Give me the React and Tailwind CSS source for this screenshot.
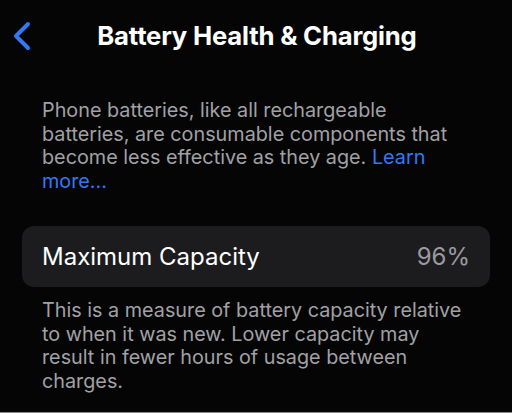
import React from 'react';

const App = () => {
  return (
    <div className="w-[512px] h-[413px] overflow-hidden bg-[#050505] text-white flex flex-col font-['Inter','Liberation_Sans',sans-serif] border-b border-[#8a8a8a]">
      {/* Nav bar */}
      <div className="relative h-[74px] flex items-center justify-center">
        <svg
          className="absolute left-[12px] top-[21px]"
          width="20"
          height="30"
          viewBox="0 0 20 30"
          fill="none"
        >
          <path
            d="M16 3 L4 15 L16 27"
            stroke="#3478f6"
            strokeWidth="4"
            strokeLinecap="round"
            strokeLinejoin="round"
          />
        </svg>
        <h1 className="text-[25.7px] font-bold tracking-[-0.2px] mt-[-1px] ml-[2px]">
          Battery Health &amp; Charging
        </h1>
      </div>

      <p className="ml-[42px] w-[432px] mt-[25px] text-[19.8px] leading-[23.5px] text-[#a1a1a6]">
        Phone batteries, like all rechargeable batteries, are consumable components that become less effective as they age.{' '}
        <span className="text-[#3478f6]">Learn more...</span>
      </p>

      {/* Capacity card */}
      <div className="mx-[22px] mt-[33px] h-[61px] rounded-[12px] bg-[#1c1c1e] px-[20px] flex items-center justify-between">
        <span className="text-[24px]">Maximum Capacity</span>
        <span className="text-[24px] text-[#9a9a9f]">96%</span>
      </div>

      <p className="ml-[42px] w-[432px] mt-[12px] text-[19.8px] leading-[23.5px] text-[#a1a1a6]">
        This is a measure of battery capacity relative to when it was new. Lower capacity may result in fewer hours of usage between charges.
      </p>
    </div>
  );
};

export default App;
